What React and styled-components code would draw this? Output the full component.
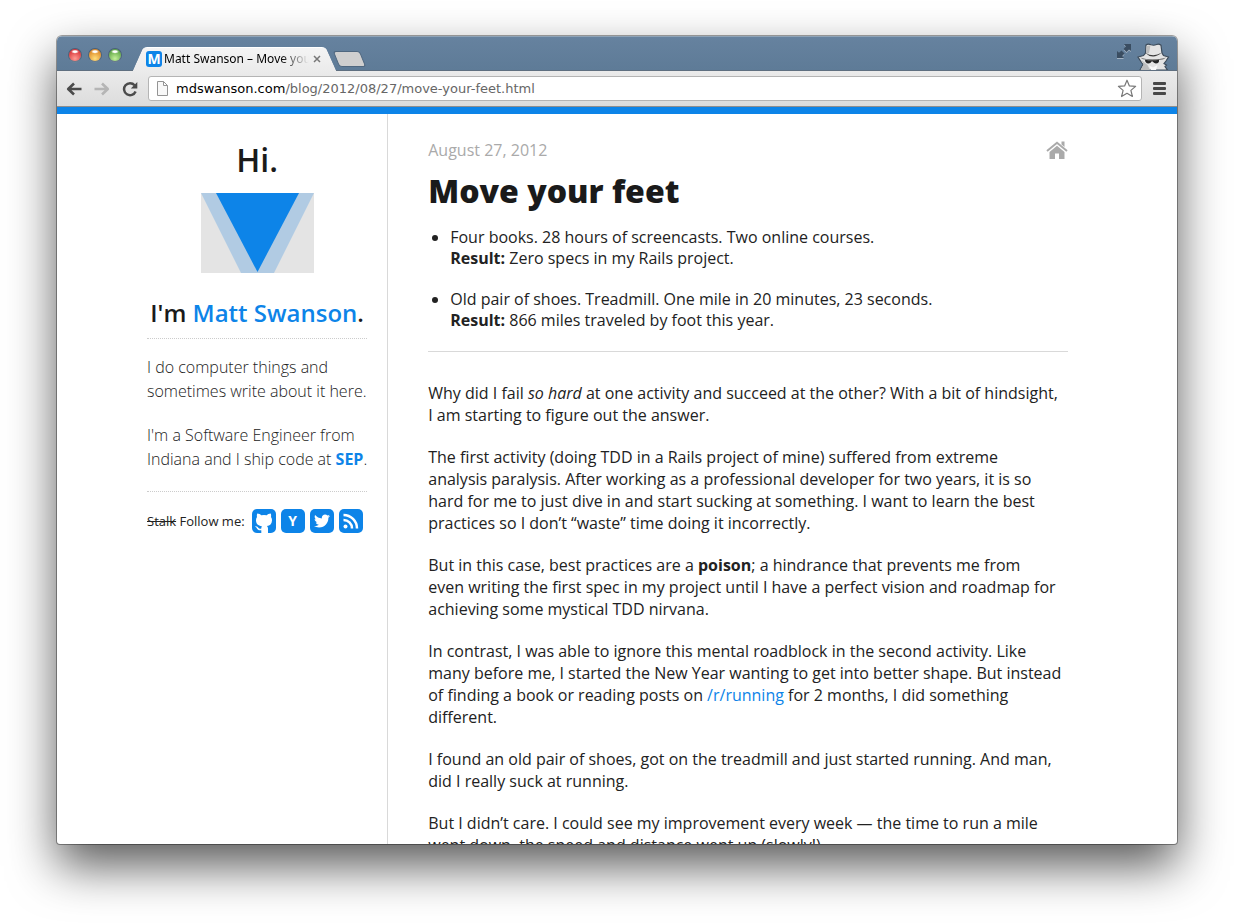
import React from "react";
import styled, { createGlobalStyle } from "styled-components";
import { FaTwitter } from "react-icons/fa";

const blue = "#0d84e8";
const ui = '"DejaVu Sans", sans-serif';

const GlobalStyle = createGlobalStyle`
  *, *::before, *::after { box-sizing: border-box; }
  body { margin: 0; background: #fff; color: #222; font: 16px/22px "Open Sans", sans-serif; font-kerning: none; }
  button { padding: 0; border: 0; background: none; cursor: pointer; font: inherit; color: inherit; }
  a { color: ${blue}; text-decoration: none; }
`;

const Desktop = styled.div`
  height: 100vh;
  display: flex;
  padding: 36px 57px 79px;
`;

const BrowserWindow = styled.div`
  flex: 1;
  min-width: 0;
  display: flex;
  flex-direction: column;
  border-radius: 5px 5px 3px 3px;
  background: #fff;
  overflow: hidden;
  box-shadow: 0 0 0 1px rgba(0, 0, 0, 0.35), 0 22px 48px rgba(0, 0, 0, 0.65);
`;

const TitleBar = styled.header`
  flex: none;
  height: 35px;
  display: flex;
  align-items: flex-end;
  padding: 0 7px 0 12px;
  background: linear-gradient(#66829f, #5e7b97);
  border-top: 1px solid #8fa3b6;
  border-bottom: 1px solid #5f6f80;
`;

const Lights = styled.div`
  display: flex;
  gap: 8px;
  align-self: center;
  margin-top: 3px;
`;

const Light = styled.button`
  width: 12px;
  height: 12px;
  border-radius: 50%;
  background: radial-gradient(ellipse 4px 2px at 50% 22%, #fff 40%, transparent), radial-gradient(circle at 50% 80%, ${(p) => p.$glow}, ${(p) => p.$tone} 75%);
  box-shadow: 0 0 0 1px rgba(45, 60, 75, 0.45), 0 1px 1px rgba(255, 255, 255, 0.4);
`;

const Tab = styled.div`
  position: relative;
  z-index: 0;
  width: 188px;
  height: 24px;
  margin: 0 0 -1px 20px;
  padding: 0 6px 0 5px;
  display: flex;
  align-items: center;
  gap: 2px;
  &::before, &::after {
    content: "";
    position: absolute;
    z-index: -1;
    top: 0;
    bottom: 0;
    background: linear-gradient(#f4f4f4, #ebebeb);
    border-top: 1px solid #fff;
  }
  &::before { left: -3px; right: 20px; transform: skewX(-24deg); border-radius: 4px 0 0 0; }
  &::after { right: -2px; left: 20px; transform: skewX(24deg); border-radius: 0 4px 0 0; }
`;

const Favicon = styled.span`
  flex: none;
  width: 16px;
  height: 16px;
  border-radius: 3px;
  background: ${blue};
  color: #fff;
  font: bold 14px/16px "Open Sans", sans-serif;
  text-align: center;
`;

const TabTitle = styled.span`
  flex: 1;
  overflow: hidden;
  white-space: nowrap;
  color: #000;
  font: 12px/16px "Noto Sans", sans-serif;
  mask-image: linear-gradient(90deg, #000 80%, transparent);
`;

const TabClose = styled.button`
  width: 12px;
  height: 12px;
  display: flex;
  align-items: center;
  justify-content: center;
`;

const NewTab = styled.button`
  width: 27px;
  height: 16px;
  margin: 0 0 3px 7px;
  border: 1px solid #4f677f;
  border-radius: 3px;
  background: #cfcfcf;
  transform: skewX(22deg);
`;

const TitleActions = styled.div`
  margin-left: auto;
  display: flex;
  align-items: flex-start;
  gap: 5px;
`;

const Toolbar = styled.nav`
  flex: none;
  height: 36px;
  display: flex;
  align-items: center;
  padding: 0 9px 0 7px;
  background: linear-gradient(#ebebeb, #dcdcdc);
  border-bottom: 1px solid #8e8e8e;
`;

const ToolButton = styled.button`
  width: 19px;
  height: 18px;
  margin-right: 9px;
  display: flex;
  align-items: center;
  justify-content: center;
  color: ${(p) => (p.$muted ? "#b5b5b5" : "#4b4b4b")};
`;

const AddressBar = styled.form`
  flex: 1;
  height: 25px;
  display: flex;
  align-items: center;
  margin-right: 11px;
  padding: 0 4px 0 7px;
  background: #fff;
  border: 1px solid #b4b4b4;
  border-radius: 3px;
`;

const Address = styled.div`
  flex: 1;
  display: grid;
  margin-left: 7px;
  font: 13px/20px ${ui};
  color: #666;
  & > * { grid-area: 1 / 1; }
`;

const Domain = styled.span`
  color: #000;
`;

const AddressInput = styled.input`
  min-width: 0;
  padding: 0;
  border: 0;
  outline: 0;
  background: transparent;
  font: inherit;
  color: transparent;
`;

const BookmarkButton = styled.button`
  display: flex;
`;

const MenuButton = styled.button`
  width: 13px;
  height: 13px;
  margin-right: 2px;
  display: flex;
  flex-direction: column;
  justify-content: space-between;
  &::before, &::after, & > span {
    content: "";
    width: 13px;
    height: 3px;
    border-radius: 1px;
    background: #484848;
  }
`;

const Page = styled.div`
  flex: 1;
  min-height: 0;
  overflow: hidden;
  display: flex;
  justify-content: center;
  border-top: 7px solid ${blue};
`;

const Container = styled.div`
  flex: 0 1 940px;
  display: flex;
`;

const Sidebar = styled.aside`
  flex: 0 0 241px;
  padding: 26px 20px 0 0;
  border-right: 1px solid #d9d9d9;
`;

const Greeting = styled.h1`
  margin: 0 0 13px;
  color: #1a1a1a;
  font-size: 32px;
  font-weight: 600;
  line-height: 40px;
  text-align: center;
`;

const Logo = styled.svg`
  display: block;
  width: 113px;
  height: 80px;
  margin: 0 auto 24px;
`;

const Intro = styled.h2`
  margin: 0;
  padding-bottom: 9px;
  border-bottom: 1px dotted #ccc;
  color: #1a1a1a;
  font-size: 24px;
  font-weight: 600;
  line-height: 32px;
  text-align: center;
  white-space: nowrap;
`;

const Bio = styled.div`
  padding: 16px 0 20px;
  border-bottom: 1px dotted #ccc;
  font-weight: 300;
  line-height: 24px;
  white-space: nowrap;
  p { margin: 0 0 20px; }
  p:last-child { margin: 0; }
  a { font-weight: 700; }
`;

const Follow = styled.div`
  display: flex;
  align-items: center;
  gap: 5px;
  margin-top: 17px;
  font-size: 13px;
  white-space: nowrap;
`;

const FollowLabel = styled.span`
  margin-right: 2px;
`;

const SocialLink = styled.a`
  flex: none;
  display: flex;
  align-items: center;
  justify-content: center;
  width: 24px;
  height: 24px;
  border-radius: 5px;
  background: ${blue};
  color: #fff;
  font-size: 14px;
  font-weight: 700;
`;

const Article = styled.main`
  flex: 1;
  min-width: 0;
  padding: 24px 19px 0 40px;
  color: #222;
`;

const Meta = styled.div`
  display: flex;
  justify-content: space-between;
  align-items: center;
  height: 24px;
  color: #aaa;
`;

const HomeLink = styled.a`
  display: flex;
  color: #aaa;
`;

const Title = styled.h2`
  margin: 9px 0 16px;
  color: #1a1a1a;
  font-size: 32px;
  font-weight: 800;
  line-height: 40px;
`;

const Results = styled.ul`
  margin: 0;
  padding: 0 0 20px 22px;
  border-bottom: 1px solid #d9d9d9;
  line-height: 21px;
  li + li { margin-top: 20px; }
`;

const Story = styled.div`
  padding-top: 30px;
  p { margin: 0 0 20px; }
`;

const paragraphs = [
  <>Why did I fail <em>so hard</em> at one activity and succeed at the other? With a bit of hindsight,<br />I am starting to figure out the answer.</>,
  <>The first activity (doing TDD in a Rails project of mine) suffered from extreme<br />analysis paralysis. After working as a professional developer for two years, it is so<br />hard for me to just dive in and start sucking at something. I want to learn the best<br />practices so I don’t “waste” time doing it incorrectly.</>,
  <>But in this case, best practices are a <strong>poison</strong>; a hindrance that prevents me from<br />even writing the first spec in my project until I have a perfect vision and roadmap for<br />achieving some mystical TDD nirvana.</>,
  <>In contrast, I was able to ignore this mental roadblock in the second activity. Like<br />many before me, I started the New Year wanting to get into better shape. But instead<br />of finding a book or reading posts on <a href="#running">/r/running</a> for 2 months, I did something<br />different.</>,
  <>I found an old pair of shoes, got on the treadmill and just started running. And man,<br />did I really suck at running.</>,
  <>But I didn’t care. I could see my improvement every week — the time to run a mile<br />went down, the speed and distance went up (slowly!).</>,
];

const ArrowIcon = ({ flip }) => (
  <svg width="16" height="14" viewBox="0 0 16 14" fill="none" stroke="currentColor" strokeWidth="2.6" strokeLinejoin="round" transform={flip ? "scale(-1 1)" : undefined}>
    <path d="M15.5 7H2.5M8 1.5L2.2 7L8 12.5" />
  </svg>
);

const ReloadIcon = () => (
  <svg width="16" height="16" viewBox="0 0 16 16">
    <path d="M12.6 4.2A6 6 0 1 0 13.6 10.5" fill="none" stroke="currentColor" strokeWidth="2.5" />
    <path d="M15.3 1V7.500H8.800Z" fill="currentColor" />
  </svg>
);

const PageIcon = () => (
  <svg width="13" height="15" viewBox="0 0 13 15" fill="#f8f8f8" stroke="#949494">
    <path d="M1.500.500H7.500L11.500 4.500V14.500H1.500ZM7.500.500V4.500H11.500" />
  </svg>
);

const StarIcon = () => (
  <svg width="20" height="19" viewBox="0 0 20 19" fill="#fff" stroke="#777" strokeWidth="1.2" strokeLinejoin="round">
    <path d="M10 1.200L12.400 6.900L18.600 7.400L13.900 11.400L15.400 17.500L10 14.300L4.600 17.500L6.100 11.400L1.400 7.400L7.600 6.900Z" />
  </svg>
);

const ExpandIcon = () => (
  <svg width="15" height="16" viewBox="0 0 15 16">
    <g id="expand" fill="#a4b4c4" transform="translate(0 1)">
      <path d="M7 0H14V7L12 5.500L9.500 8L6.500 5L8.800 2.500ZM0 7L2 8.800L4.500 6.500L7.500 9.500L5.200 12L7 14H0Z" />
    </g>
    <path d="M7 0H14V7L12 5.500L9.500 8L6.500 5L8.800 2.500ZM0 7L2 8.800L4.500 6.500L7.500 9.500L5.200 12L7 14H0Z" fill="#3a4d61" />
  </svg>
);

const IncognitoIcon = () => (
  <svg width="33" height="27" viewBox="0 0 33 27">
    <path d="M9 2Q11 .500 14 1.800Q17 2.800 19.500 1.500Q22 .500 24 2.200L25 10L26.500 12.500L31.500 14L29 18L27 20.500L29.500 22L28 23.500L30.500 27H3L6 21.500L4.500 19.500L1 14L6.500 12.500L8.500 10Z" fill="#e4e4e4" stroke="#3d4c5b" strokeWidth="1.200" />
    <path d="M9.500 3L13.500 2.300L12 10L9 11ZM4.500 17L8 20L10.500 22L13 27H3.500L6.500 21.500Z" fill="#bdbdbd" />
    <path d="M8.500 10Q16.500 14.500 24.500 9.800Q20 13.700 16 13.600Q11.500 13.300 8.500 10Z" fill="#3b3b3b" />
    <path d="M3 14.500Q15 18.200 29.500 14.500L26 16.500Q15 18.500 6 16.300Z" fill="#777" />
    <path d="M8 16.700Q15 18 22 16.700Q22.500 20.500 18.800 20.500Q16.500 20.300 15.800 18.600H14.500Q13.800 20.500 11.300 20.500Q8 20 8 16.700Z" fill="#252525" />
    <path d="M12 22.500L16 24.500L20.500 22L19 27H14Z" fill="#fafafa" />
  </svg>
);

const HomeIcon = () => (
  <svg width="22" height="18" viewBox="0 0 22 18">
    <path d="M15.500 .500H18.500V6L15.500 3.500Z" fill="currentColor" />
    <path d="M1 10L11 1.700L21 10" fill="none" stroke="currentColor" strokeWidth="2" />
    <path d="M11 4.800L18.500 11V18H13V12.500H9V18H3.500V11Z" fill="currentColor" />
  </svg>
);

const CatIcon = () => (
  <svg width="24" height="24" viewBox="0 0 24 24" fill="#fff">
    <path d="M5.300 4.500C7 4.500 8.300 5.400 9.200 6.200Q12 5.600 14.800 6.200C15.700 5.400 17 4.500 18.700 4.500C19.300 6 19.200 7.300 19 8Q20.200 9.500 20 11.500C19.800 15 18 16.600 15 17.100Q16 18.200 16 19.500V24H9.300V21.300C6.500 21.600 5.500 20.500 4.800 19.200C4.300 18.300 3.700 18 3 17.500C4.700 16.900 5.700 18 6.300 18.800C7 19.700 8 19.900 9.300 19.500Q9.300 18 9.900 17.200C6 16.600 4.200 15 4 11.500Q3.800 9.500 5 8C4.800 7.300 4.700 6 5.300 4.500Z" />
  </svg>
);

const FeedIcon = () => (
  <svg width="24" height="24" viewBox="0 0 24 24" fill="none" stroke="#fff" strokeWidth="2.500">
    <path d="M4.500 6A13.500 13.500 0 0 1 18 19.500M4.500 11A8.500 8.500 0 0 1 13 19.500" />
    <circle cx="6.500" cy="17.500" r="2" fill="#fff" stroke="none" />
  </svg>
);

export default function App() {
  return (
    <>
      <GlobalStyle />
      <Desktop>
        <BrowserWindow>
          <TitleBar>
            <Lights>
              <Light aria-label="Close" $tone="#d83438" $glow="#ff9c94" />
              <Light aria-label="Minimize" $tone="#dc8624" $glow="#ffdf7c" />
              <Light aria-label="Zoom" $tone="#5da444" $glow="#c4f09a" />
            </Lights>
            <Tab>
              <Favicon>M</Favicon>
              <TabTitle>Matt Swanson – Move your</TabTitle>
              <TabClose aria-label="Close tab">
                <svg width="8" height="8" viewBox="0 0 8 8" stroke="#777" strokeWidth="1.500"><path d="M1 1L7 7M7 1L1 7" /></svg>
              </TabClose>
            </Tab>
            <NewTab aria-label="New tab" />
            <TitleActions>
              <button aria-label="Full screen"><ExpandIcon /></button>
              <IncognitoIcon />
            </TitleActions>
          </TitleBar>
          <Toolbar>
            <ToolButton aria-label="Back"><ArrowIcon /></ToolButton>
            <ToolButton aria-label="Forward" $muted><ArrowIcon flip /></ToolButton>
            <ToolButton aria-label="Reload"><ReloadIcon /></ToolButton>
            <AddressBar>
              <PageIcon />
              <Address>
                <span><Domain>mdswanson.com</Domain>/blog/2012/08/27/move-your-feet.html</span>
                <AddressInput aria-label="Address" />
              </Address>
              <BookmarkButton type="button" aria-label="Bookmark"><StarIcon /></BookmarkButton>
            </AddressBar>
            <MenuButton aria-label="Menu"><span /></MenuButton>
          </Toolbar>
          <Page>
            <Container>
              <Sidebar>
                <Greeting>Hi.</Greeting>
                <Logo viewBox="0 0 113 80">
                  <path d="M0 0H113V80H0Z" fill="#e4e4e4" />
                  <path d="M0 0H113L73 80H40Z" fill="#b1cbe3" />
                  <path d="M15 0H98L56.500 79Z" fill={blue} />
                </Logo>
                <Intro>I'm <a href="#about">Matt Swanson</a>.</Intro>
                <Bio>
                  <p>I do computer things and<br />sometimes write about it here.</p>
                  <p>I'm a Software Engineer from<br />Indiana and I ship code at <a href="#sep">SEP</a>.</p>
                </Bio>
                <Follow>
                  <FollowLabel><s>Stalk</s> Follow me:</FollowLabel>
                  <SocialLink href="#github" aria-label="GitHub"><CatIcon /></SocialLink>
                  <SocialLink href="#hn" aria-label="Hacker News">Y</SocialLink>
                  <SocialLink href="#twitter" aria-label="Twitter"><FaTwitter size={16} /></SocialLink>
                  <SocialLink href="#rss" aria-label="RSS"><FeedIcon /></SocialLink>
                </Follow>
              </Sidebar>
              <Article>
                <Meta>
                  <time dateTime="2012-08-27">August 27, 2012</time>
                  <HomeLink href="#home" aria-label="Home"><HomeIcon /></HomeLink>
                </Meta>
                <Title>Move your feet</Title>
                <Results>
                  <li>Four books. 28 hours of screencasts. Two online courses.<br /><strong>Result:</strong> Zero specs in my Rails project.</li>
                  <li>Old pair of shoes. Treadmill. One mile in 20 minutes, 23 seconds.<br /><strong>Result:</strong> 866 miles traveled by foot this year.</li>
                </Results>
                <Story>
                  {paragraphs.map((text, i) => <p key={i}>{text}</p>)}
                </Story>
              </Article>
            </Container>
          </Page>
        </BrowserWindow>
      </Desktop>
    </>
  );
}
